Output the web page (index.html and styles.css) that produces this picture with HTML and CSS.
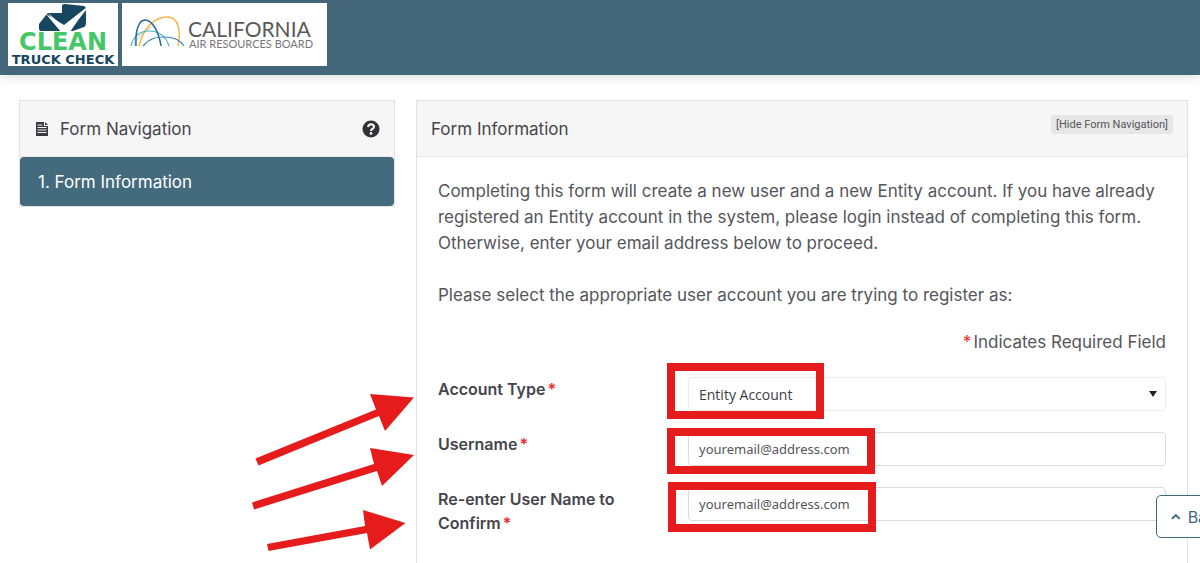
FILE: index.html
```html
<!DOCTYPE html>
<html lang="en">
<head>
<meta charset="utf-8">
<meta name="viewport" content="width=device-width, initial-scale=1">
<title>Form Information</title>
<link rel="stylesheet" href="styles.css">
</head>
<body>
<header class="site-header">
  <svg class="logo" width="110" height="63" viewBox="0 0 110 63" role="img" aria-label="Clean Truck Check">
    <rect width="110" height="63" fill="#fff"/>
    <path d="M31 21L38 12Q39 10 41 10H54V3Q54 1 57 1L76 3Q78 4 78 6V20Q78 23 76 24L65 28H33Q31 28 31 26z" fill="#174660"/>
    <path d="M38 11L56 22L79 4L62 29H53z" fill="#fff"/>
    <path d="M54 10L57 17L56 20L40 10z" fill="#174660"/>
    <path d="M40 10L56 24L79 5L79 6L61 28H54z" fill="#fff"/>
    <text class="logo-clean" x="55" y="47">CLEAN</text>
    <text class="logo-truck" x="55" y="61">TRUCK CHECK</text>
  </svg>
  <svg class="logo" width="205" height="63" viewBox="0 0 205 63" role="img" aria-label="California Air Resources Board">
    <rect width="205" height="63" fill="#fff"/>
    <g fill="none" stroke-width="1.2">
      <path d="M12 43C15 34 23 26 33 23" stroke="#b9dff0"/>
      <path d="M17 43C21 26 32 14 45 14C57 14 59 28 56 43" stroke="#f5b54d" stroke-width="1.5"/>
      <path d="M9 43C12 31 20 28 27 28C38 28 44 34 47 43" stroke="#42b7b4"/>
      <path d="M14 43C13 27 17 17 23 17C31 17 37 30 39 43" stroke="#24699a" stroke-width="1.5"/>
      <path d="M21 43C28 35 34 34 42 34C53 34 59 38 62 43" stroke="#3a85c2"/>
    </g>
    <text class="logo-california" x="66" y="34">CALIFORNIA</text>
    <text class="logo-board" x="67" y="45">AIR RESOURCES BOARD</text>
  </svg>
</header>

<main class="page">
  <nav class="card side-nav" aria-label="Form Navigation">
    <div class="card-head side-head">
      <svg width="12" height="14" viewBox="0 0 12 14" aria-hidden="true">
        <path d="M0 0h8v4h4v10H0z" fill="#3b3a42"/><path d="M9 0l3 3H9z" fill="#3b3a42"/>
        <path d="M1.500 5.500h9M1.500 8h9M1.500 10.500h9M1.500 3h5" stroke="#f6f6f6" stroke-width="1"/>
      </svg>
      <h2 class="card-title">Form Navigation</h2>
      <button class="help" type="button" aria-label="Help">
        <svg width="18" height="18" viewBox="0 0 18 18" aria-hidden="true">
          <circle cx="9" cy="9" r="8.5" fill="#333238"/>
          <path d="M6 7Q6.400 4.200 9 4.200Q12 4.300 12 6.700Q12 8.200 10.300 9Q9 9.600 9 10.900" fill="none" stroke="#fff" stroke-width="2"/>
          <circle cx="9" cy="13.400" r="1.300" fill="#fff"/>
        </svg>
      </button>
    </div>
    <a class="nav-item" href="#form" aria-current="step">1. Form Information</a>
  </nav>

  <section class="card form-card" id="form">
    <div class="card-head">
      <h1 class="card-title">Form Information</h1>
      <button class="hide-nav" type="button">[Hide Form Navigation]</button>
    </div>
    <form class="form-body">
      <p class="intro">Completing this form will create a new user and a new Entity account. If you have already registered an Entity account in the system, please login instead of completing this form. Otherwise, enter your email address below to proceed.</p>
      <p class="prompt">Please select the appropriate user account you are trying to register as:</p>
      <p class="required-note"><span class="star">*</span>Indicates Required Field</p>
      <div class="fields">
        <div class="row">
          <label for="type">Account Type<span class="star">*</span></label>
          <div class="field">
            <select class="control account" id="type"><option>Entity Account</option></select>
            <svg class="caret" width="8" height="6" viewBox="0 0 8 6" aria-hidden="true"><path d="M0 0h8L4 6z" fill="#222"/></svg>
            <span class="mark mark-type"></span>
          </div>
        </div>
        <div class="row">
          <label for="user">Username<span class="star">*</span></label>
          <div class="field">
            <input class="control" id="user" type="email" value="youremail@address.com">
            <span class="mark mark-user"></span>
          </div>
        </div>
        <div class="row">
          <label for="confirm">Re-enter User Name to Confirm<span class="star">*</span></label>
          <div class="field">
            <input class="control" id="confirm" type="email" value="youremail@address.com">
            <span class="mark mark-confirm"></span>
          </div>
        </div>
        <svg class="arrows" width="170" height="165" viewBox="248 390 170 165" aria-hidden="true">
          <g fill="#e61b1b">
            <path d="M255.500 458.500L376 409.500L370 394L414 397.500L385 431L379 416L258.500 465.500z"/>
            <path d="M252 502.500L374 464L370 448L414 455L382 486L377 471L254 509.500z"/>
            <path d="M267 544L365 526L363 510L405.500 523L370 549.500L367 533L268.500 551z"/>
          </g>
        </svg>
      </div>
    </form>
  </section>
</main>

<button class="back" type="button">
  <svg width="10" height="7" viewBox="0 0 10 7" aria-hidden="true"><path d="M1 6l4-4 4 4" fill="none" stroke="#42687b" stroke-width="2"/></svg>
  Back
</button>
</body>
</html>
```
FILE: styles.css
```css
* { box-sizing: border-box; }

body {
  margin: 0;
  min-height: 100vh;
  display: flex;
  flex-direction: column;
  overflow-x: hidden;
  background: #fff;
  color: #55555a;
  font: 17px/26px Inter, "Liberation Sans", sans-serif;
}

h1, h2, p { margin: 0; }
button, input, select { font: inherit; color: inherit; }

.site-header {
  display: flex;
  gap: 4px;
  padding: 3px 8px 9px;
  background: #446679;
  box-shadow: 0 2px 10px #0002;
}
.logo { display: block; }
.logo-clean { font: 700 24px "DejaVu Sans", sans-serif; fill: #45c667; text-anchor: middle; }
.logo-truck { font: 700 13px "DejaVu Sans", sans-serif; fill: #174660; text-anchor: middle; }
.logo-california { font: 21px Lato, sans-serif; fill: #59595b; }
.logo-board { font: 11px Lato, sans-serif; fill: #77777a; }

.page {
  flex: 1;
  display: grid;
  grid-template-columns: 376fr 772fr;
  gap: 21px;
  padding: 25px 12px 0 19px;
}
.card { border: 1px solid #e2e2e4; }
.card-head {
  display: flex;
  height: 56px;
  padding: 0 14px;
  align-items: center;
  background: #f6f6f6;
  border-bottom: 1px solid #e9e9ea;
}
.card-title { font-size: 17px; font-weight: 400; color: #46454c; }

.side-nav { align-self: start; }
.side-head { gap: 12px; padding-left: 16px; }
.help { display: flex; margin-left: auto; padding: 0; border: 0; background: none; }
.nav-item {
  display: block;
  padding: 12px 18px 11px;
  border-radius: 4px;
  background: #446a7d;
  color: #fff;
  text-decoration: none;
}

.form-card { border-bottom: 0; }
.hide-nav {
  align-self: flex-start;
  margin: 14px 0 0 auto;
  padding: 1px 5px 0;
  border: 0;
  border-radius: 2px;
  background: #e6e6e7;
  font-family: Roboto, sans-serif;
  font-size: 11px;
  line-height: 18px;
}
.form-body { padding: 21px; }
.intro { margin-bottom: 26px; }
.prompt { margin-bottom: 21px; }
.required-note { text-align: right; }
.star { margin: 0 2px; color: #ee2b2b; }

.fields { position: relative; display: grid; gap: 21px; margin-top: 22px; }
.row { display: grid; grid-template-columns: 250fr 478fr; height: 34px; }
.row label {
  padding-right: 40px;
  color: #46454c;
  font-size: 16px;
  font-weight: 600;
  line-height: 24px;
}
.field { position: relative; }
.control {
  display: block;
  width: 100%;
  height: 34px;
  padding: 0 10px;
  border: 1px solid #d8dcdf;
  border-radius: 4px;
  background: #fff;
  font: 13px "Noto Sans", sans-serif;
}
.account { appearance: none; border-color: #ececee; color: #3d3d40; font: 14px "Open Sans", sans-serif; }
.caret { position: absolute; right: 9px; top: 14px; pointer-events: none; }

.mark { position: absolute; border: 8px solid #e61b1b; pointer-events: none; }
.mark-type { left: -21px; top: -14px; width: 157px; height: 56px; }
.mark-user { left: -21px; top: -4px; width: 208px; height: 46px; }
.mark-confirm { left: -20px; top: -5px; width: 208px; height: 50px; }
.arrows { position: absolute; left: -190px; top: 13px; pointer-events: none; }

.back {
  position: fixed;
  right: -40px;
  bottom: 25px;
  display: flex;
  width: 84px;
  height: 43px;
  padding: 0 14px;
  align-items: center;
  gap: 7px;
  border: 1px solid #42687b;
  border-radius: 5px;
  background: #fff;
  color: #42687b;
  font-size: 16px;
}
```
